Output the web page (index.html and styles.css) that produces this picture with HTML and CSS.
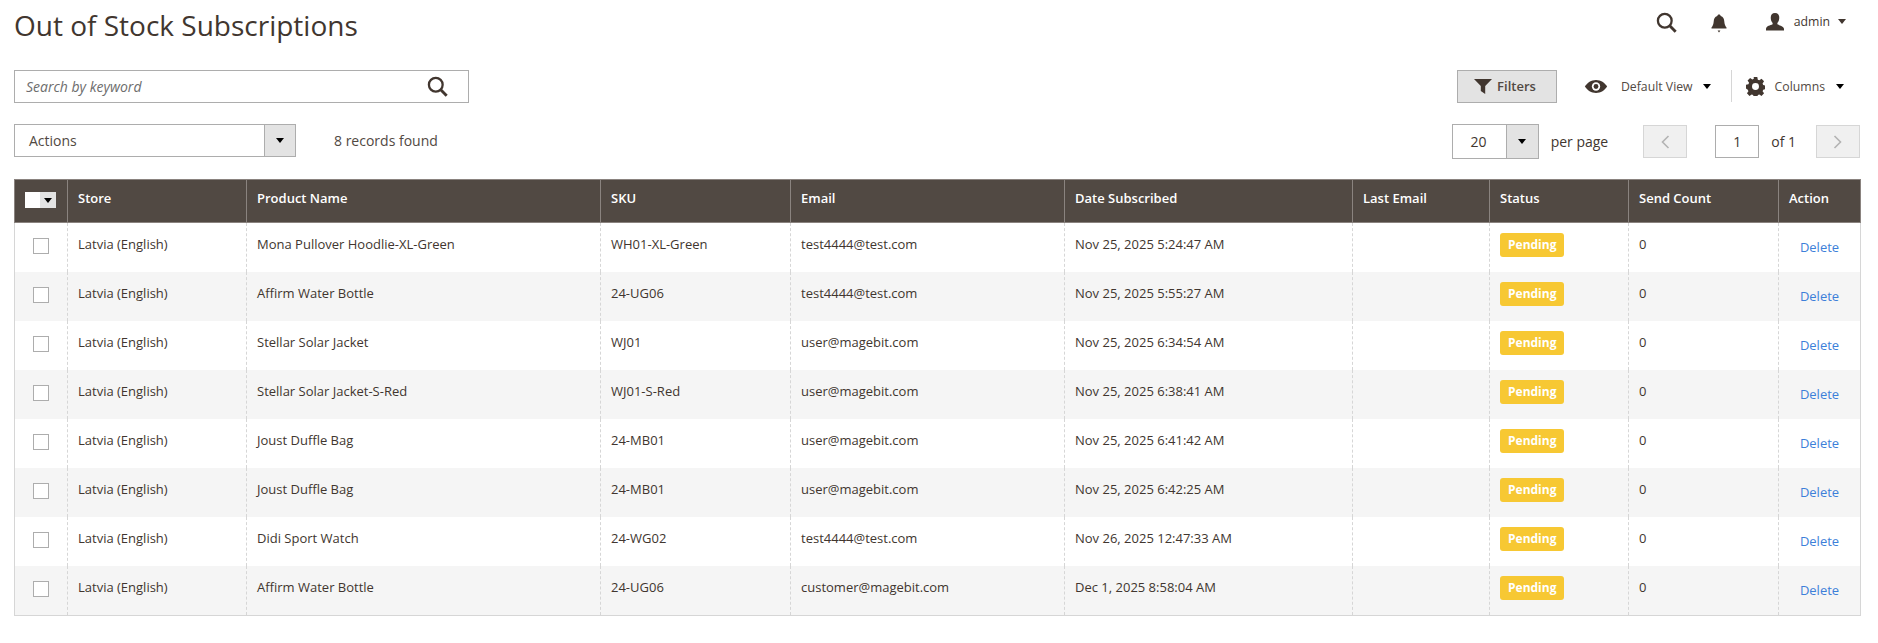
FILE: index.html
```html
<!DOCTYPE html>
<html lang="en">
<head>
<meta charset="utf-8">
<title>Out of Stock Subscriptions</title>
<link rel="stylesheet" href="styles.css">
</head>
<body>
<div class="page">
  <header class="top">
    <h1 class="title">Out of Stock Subscriptions</h1>
    <div class="top-actions">
      <svg class="ic-search-top" viewBox="0 0 22 22"><circle cx="9.2" cy="9.2" r="7.2" fill="none" stroke="#41362f" stroke-width="2.4"/><path d="M14.4 14.4L20.6 20.6" stroke="#41362f" stroke-width="3" fill="none"/></svg>
      <svg class="ic-bell" viewBox="0 0 16 19"><path d="M8 0.5c1 0 1.6.6 1.7 1.5 2.5.7 3.4 2.8 3.6 5.4.2 2.6.8 4.3 2.2 6v1.2H.5v-1.2c1.400-1.700 2-3.400 2.200-6 .2-2.600 1.100-4.700 3.600-5.400C6.400 1.100 7 .5 8 .5z" fill="#41362f"/><path d="M6.600 16.600h2.800L8 18.600z" fill="#41362f"/></svg>
      <div class="user">
        <svg class="ic-user" viewBox="0 0 20 19"><path d="M10 0c3 0 4.500 2 4.500 5 0 2.500-1 4.500-2 5.500v1.500c2.500 1.200 6.500 1.800 7 4.500v1.900H.5v-1.900c.5-2.700 4.500-3.300 7-4.500v-1.500c-1-1-2-3-2-5.500 0-3 1.500-5 4.500-5z" fill="#41362f"/></svg>
        <span class="user-name">admin</span>
        <i class="caret caret-user"></i>
      </div>
    </div>
  </header>

  <section class="bar bar-search">
    <div class="search">
      <span class="search-ph">Search by keyword</span>
      <svg class="ic-search" viewBox="0 0 22 22"><circle cx="9.200" cy="9.200" r="7.200" fill="none" stroke="#41362f" stroke-width="2.400"/><path d="M14.400 14.400L20.600 20.600" stroke="#41362f" stroke-width="3" fill="none"/></svg>
    </div>
    <div class="bar-right">
      <button class="filters">
        <svg class="ic-filter" viewBox="0 0 18 15"><path d="M0 0h18l-6.800 7V15l-4.400-3V7z" fill="#41362f"/></svg>
        <span>Filters</span>
      </button>
      <div class="view">
        <svg class="ic-eye" viewBox="0 0 24 14"><path d="M12 0c5 0 9.500 3 12 7-2.500 4-7 7-12 7S2.500 11 0 7c2.500-4 7-7 12-7z" fill="#41362f"/><circle cx="12" cy="7" r="4.500" fill="#fff"/><circle cx="12" cy="7" r="2.600" fill="#41362f"/></svg>
        <span class="view-label">Default View</span>
        <i class="caret"></i>
      </div>
      <div class="columns">
        <svg class="ic-gear" viewBox="0 0 18 18"><path fill="#41362f" fill-rule="evenodd" d="M7.300 0h3.400l.5 2.500 1.400.6 2.100-1.400 2.400 2.400-1.400 2.100.6 1.400 2.500.5v3.400l-2.500.5-.6 1.400 1.400 2.100-2.400 2.400-2.100-1.400-1.400.6-.5 2.500H7.300l-.5-2.500-1.400-.6-2.100 1.400-2.400-2.400 1.400-2.100-.6-1.400L-.2 10.700V7.300l2.500-.5.6-1.400L1.500 3.300l2.400-2.400L6 2.300l1.400-.6zM9 5.700a3.300 3.300 0 1 0 0 6.600 3.300 3.300 0 0 0 0-6.600z"/></svg>
        <span class="view-label">Columns</span>
        <i class="caret"></i>
      </div>
    </div>
  </section>

  <section class="bar bar-actions">
    <div class="actions-left">
      <div class="select select-actions"><span>Actions</span><b class="select-btn"><i class="caret"></i></b></div>
      <span class="records">8 records found</span>
    </div>
    <div class="pager">
      <div class="select select-size"><span>20</span><b class="select-btn"><i class="caret"></i></b></div>
      <span class="per-page">per page</span>
      <button class="page-btn prev"><svg viewBox="0 0 9 14"><path d="M8 1L2 7l6 6" fill="none" stroke="#b3b3b3" stroke-width="1.600"/></svg></button>
      <span class="page-input">1</span>
      <span class="of">of 1</span>
      <button class="page-btn next"><svg viewBox="0 0 9 14"><path d="M1 1l6 6-6 6" fill="none" stroke="#b3b3b3" stroke-width="1.600"/></svg></button>
    </div>
  </section>

  <table class="grid">
    <colgroup>
      <col class="c-check"><col class="c-store"><col class="c-name"><col class="c-sku"><col class="c-email"><col class="c-date"><col class="c-last"><col class="c-status"><col class="c-count"><col class="c-action">
    </colgroup>
    <thead>
      <tr>
        <th class="th-check"><span class="multi"><span class="multi-box"></span><span class="multi-btn"><i class="caret"></i></span></span></th>
        <th>Store</th><th>Product Name</th><th>SKU</th><th>Email</th><th>Date Subscribed</th><th>Last Email</th><th>Status</th><th>Send Count</th><th>Action</th>
      </tr>
    </thead>
    <tbody>
      <tr><td class="td-check"><span class="cb"></span></td><td>Latvia (English)</td><td>Mona Pullover Hoodlie-XL-Green</td><td>WH01-XL-Green</td><td>test4444@test.com</td><td>Nov 25, 2025 5:24:47 AM</td><td></td><td class="td-status"><span class="badge">Pending</span></td><td>0</td><td class="td-action"><a>Delete</a></td></tr>
      <tr><td class="td-check"><span class="cb"></span></td><td>Latvia (English)</td><td>Affirm Water Bottle</td><td>24-UG06</td><td>test4444@test.com</td><td>Nov 25, 2025 5:55:27 AM</td><td></td><td class="td-status"><span class="badge">Pending</span></td><td>0</td><td class="td-action"><a>Delete</a></td></tr>
      <tr><td class="td-check"><span class="cb"></span></td><td>Latvia (English)</td><td>Stellar Solar Jacket</td><td>WJ01</td><td>user@magebit.com</td><td>Nov 25, 2025 6:34:54 AM</td><td></td><td class="td-status"><span class="badge">Pending</span></td><td>0</td><td class="td-action"><a>Delete</a></td></tr>
      <tr><td class="td-check"><span class="cb"></span></td><td>Latvia (English)</td><td>Stellar Solar Jacket-S-Red</td><td>WJ01-S-Red</td><td>user@magebit.com</td><td>Nov 25, 2025 6:38:41 AM</td><td></td><td class="td-status"><span class="badge">Pending</span></td><td>0</td><td class="td-action"><a>Delete</a></td></tr>
      <tr><td class="td-check"><span class="cb"></span></td><td>Latvia (English)</td><td>Joust Duffle Bag</td><td>24-MB01</td><td>user@magebit.com</td><td>Nov 25, 2025 6:41:42 AM</td><td></td><td class="td-status"><span class="badge">Pending</span></td><td>0</td><td class="td-action"><a>Delete</a></td></tr>
      <tr><td class="td-check"><span class="cb"></span></td><td>Latvia (English)</td><td>Joust Duffle Bag</td><td>24-MB01</td><td>user@magebit.com</td><td>Nov 25, 2025 6:42:25 AM</td><td></td><td class="td-status"><span class="badge">Pending</span></td><td>0</td><td class="td-action"><a>Delete</a></td></tr>
      <tr><td class="td-check"><span class="cb"></span></td><td>Latvia (English)</td><td>Didi Sport Watch</td><td>24-WG02</td><td>test4444@test.com</td><td>Nov 26, 2025 12:47:33 AM</td><td></td><td class="td-status"><span class="badge">Pending</span></td><td>0</td><td class="td-action"><a>Delete</a></td></tr>
      <tr><td class="td-check"><span class="cb"></span></td><td>Latvia (English)</td><td>Affirm Water Bottle</td><td>24-UG06</td><td>customer@magebit.com</td><td>Dec 1, 2025 8:58:04 AM</td><td></td><td class="td-status"><span class="badge">Pending</span></td><td>0</td><td class="td-action"><a>Delete</a></td></tr>
    </tbody>
  </table>
</div>
</body>
</html>
```
FILE: styles.css
```css
* { box-sizing: border-box; }
html, body { margin: 0; padding: 0; background: #fff; }
body { font-family: "Open Sans", sans-serif; font-size: 14px; color: #41362f; overflow: hidden; }
.page { padding: 0 18px 0 14px; height: 643px; }

.top { display: flex; justify-content: space-between; height: 70px; }
.title { margin: 6px 0 0; font-size: 28px; line-height: 38px; font-weight: 400; color: #41362f; }
.top-actions { display: flex; align-items: flex-start; padding-top: 12px; }
.ic-search-top { width: 21px; height: 21px; margin-right: 34px; }
.ic-bell { width: 16px; height: 19px; margin-right: 38px; margin-top: 2px; }
.user { display: flex; align-items: center; height: 19px; padding-right: 14px; }
.ic-user { width: 20px; height: 18px; margin-right: 9px; }
.user-name { font-size: 12.25px; line-height: 18px; margin-right: 8px; }
.caret { display: block; width: 0; height: 0; border-left: 4px solid transparent; border-right: 4px solid transparent; border-top: 5px solid #000; }
.caret-user { border-top-color: #41362f; }

.bar { display: flex; justify-content: space-between; }
.bar-search { height: 32px; }
.search { width: 455px; height: 33px; border: 1px solid #adadad; display: flex; align-items: center; justify-content: space-between; padding: 0 20px 0 11px; }
.search-ph { font-style: italic; font-size: 14px; color: #6d6d6d; }
.ic-search { width: 21px; height: 21px; }
.bar-right { display: flex; align-items: center; }
.filters { width: 100px; height: 33px; background: #e3e3e3; border: 1px solid #adadad; display: flex; align-items: center; justify-content: center; gap: 5px; padding: 0 4px 0 0; font: 600 13px "Open Sans", sans-serif; color: #514943; }
.ic-filter { width: 18px; height: 15px; }
.view { display: flex; align-items: center; margin-left: 27px; padding-right: 20px; height: 32px; border-right: 1px solid #d6d6d6; }
.ic-eye { width: 24px; height: 13px; margin-right: 13px; }
.view-label { font-size: 12.25px; color: #514943; }
.view .caret { margin-left: 10px; }
.columns { display: flex; align-items: center; margin-left: 14px; padding-right: 16px; }
.ic-gear { width: 19px; height: 19px; margin-right: 10px; }
.columns .caret { margin-left: 11px; }

.bar-actions { margin-top: 22px; height: 33px; align-items: flex-start; }
.actions-left { display: flex; align-items: center; }
.select { display: flex; border: 1px solid #adadad; height: 33px; align-items: stretch; background: #fff; }
.select span { flex: 1; display: flex; align-items: center; }
.select-btn { display: flex; align-items: center; justify-content: center; background: #e3e3e3; border-left: 1px solid #adadad; }
.select-actions { width: 282px; font-size: 14px; color: #514943; }
.select-actions span { padding-left: 14px; }
.select-actions .select-btn { width: 31px; }
.records { margin-left: 38px; font-size: 14px; color: #514943; }
.pager { display: flex; align-items: center; height: 35px; }
.select-size { width: 87px; height: 35px; font-size: 14px; }
.select-size span { justify-content: center; padding-right: 1px; }
.select-size .select-btn { width: 32px; }
.per-page { margin-left: 12px; font-size: 14px; }
.page-btn { width: 44px; height: 33px; background: #f0f0f0; border: 1px solid #d6d6d6; padding: 0; display: flex; align-items: center; justify-content: center; }
.page-btn svg { width: 10px; height: 14px; }
.prev { margin-left: 35px; }
.page-input { margin-left: 28px; width: 44px; height: 33px; border: 1px solid #adadad; display: flex; align-items: center; justify-content: center; font-size: 14px; }
.of { margin-left: 12px; margin-right: 20px; font-size: 14px; }

.grid { margin-top: 22px; width: 1846px; table-layout: fixed; border-collapse: collapse; border: 1px solid #d6d6d6; border-top: 0; font-size: 13px; }
.c-check { width: 53px; } .c-store { width: 179px; } .c-name { width: 354px; } .c-sku { width: 190px; } .c-email { width: 274px; }
.c-date { width: 288px; } .c-last { width: 137px; } .c-status { width: 139px; } .c-count { width: 150px; } .c-action { width: 82px; }
.grid th { height: 43px; background: #514943; color: #fff; font-weight: 600; font-size: 13px; text-align: left; padding: 0 10px 6px; border: 1px solid #8a837f; }
.grid td { height: 49px; padding: 12px 10px 0; vertical-align: top; border-left: 1px dashed #d6d6d6; border-right: 1px dashed #d6d6d6; line-height: 18px; color: #41362f; }
.grid tbody tr:last-child td { height: 50px; }
.grid tbody tr:nth-child(even) td { background: #f5f5f5; }
.grid .th-check { padding: 0 0 2px; }
.grid .td-check { padding: 15px 0 0; }
.multi { display: flex; width: 31px; height: 16px; margin-left: 10px; background: #fff; }
.multi-box { width: 15px; }
.multi-btn { flex: 1; background: #e3e3e3; display: flex; align-items: center; justify-content: center; }
.cb { display: block; width: 16px; height: 16px; border: 1px solid #adadad; background: #fff; margin-left: 18px; }
.grid .td-status { padding-top: 10px; }
.badge { display: inline-block; height: 24px; line-height: 23px; padding: 0 8px; background: #f7c833; color: #fff; font-weight: 700; font-size: 12px; border-radius: 3px; }
.grid .td-action { text-align: center; padding-top: 15px; }
.td-action a { color: #3d7fd9; font-size: 13px; }
```
